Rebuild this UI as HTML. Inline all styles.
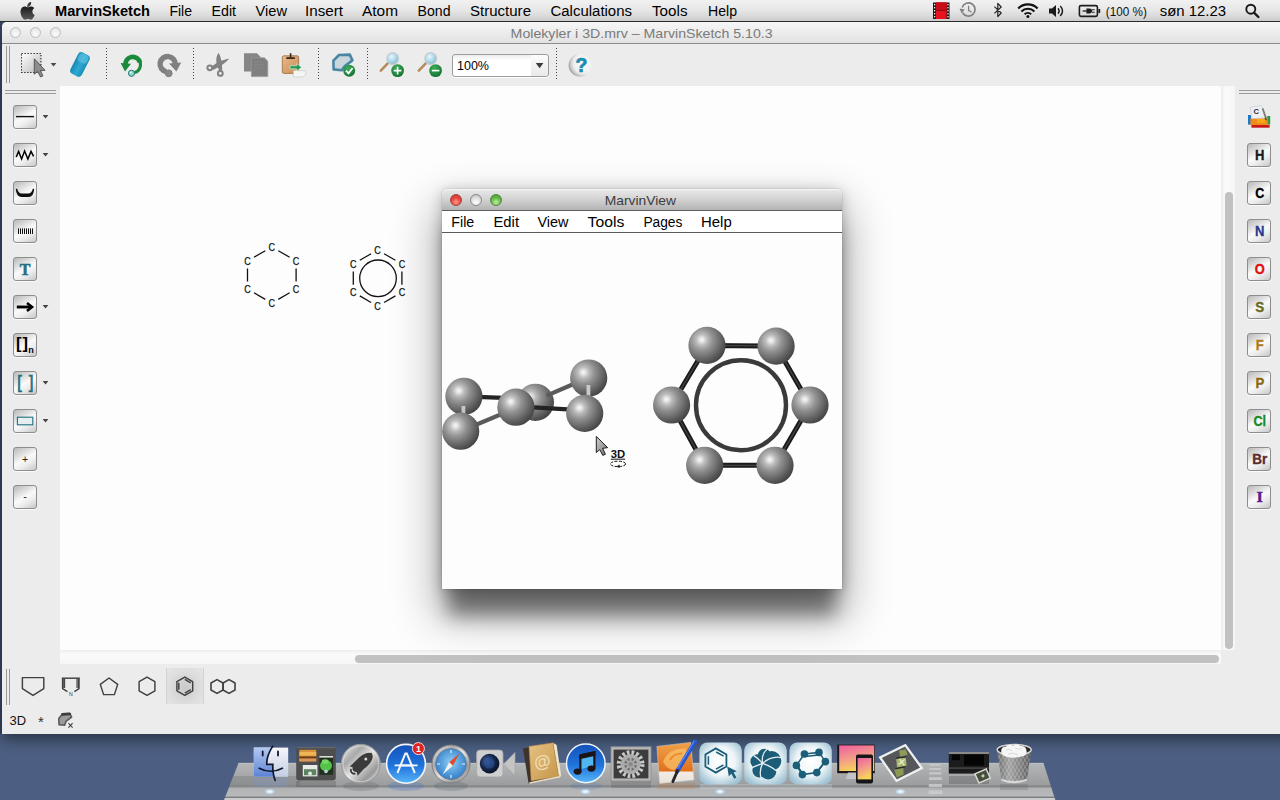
<!DOCTYPE html>
<html lang="da">
<head>
<meta charset="utf-8">
<title>Molekyler i 3D.mrv – MarvinSketch 5.10.3</title>
<style>
html,body{margin:0;padding:0;}
body{width:1280px;height:800px;overflow:hidden;background:#4c5f82;font-family:"Liberation Sans",sans-serif;position:relative;}
.abs{position:absolute;}
svg{position:absolute;left:0;top:0;overflow:visible;}
svg text{font-family:"Liberation Sans",sans-serif;}
#menubar{left:0;top:0;width:1280px;height:21px;background:linear-gradient(#f1f1f1 0%,#e8e8e8 45%,#d8d8d8 80%,#cbcbcb 100%);border-bottom:1px solid #2a2a2a;}
#deskedge{left:0;top:22px;width:2px;height:712px;background:#3a4564;}
#win{left:2px;top:22px;width:1290px;height:712px;background:#ececec;border-radius:5px 5px 0 0;box-shadow:0 6px 14px rgba(0,0,0,.45);}
#wtitle{left:2px;top:22px;width:1290px;height:21px;background:linear-gradient(#f7f7f7,#ececec 50%,#e2e2e2);border-radius:5px 5px 0 0;border-bottom:1px solid #8c8c8c;}
.tl{width:9px;height:9px;border-radius:50%;border:1.5px solid #bdbdbd;background:radial-gradient(circle at 50% 70%,#fbfbfb,#ebebeb 60%,#dddddd);top:27px;}
#canvas{left:60px;top:86px;width:1161px;height:564px;background:#fefdfd;}
#vtrack{left:1221px;top:86px;width:14px;height:564px;background:linear-gradient(90deg,#ededed,#fafafa 30%,#f6f6f6);}
#htrack{left:60px;top:650px;width:1161px;height:14px;background:linear-gradient(#ededed,#fafafa 30%,#f6f6f6);}
#vthumb{left:1225px;top:192px;width:8px;height:457px;border-radius:4px;background:#c1c1c1;}
#hthumb{left:355px;top:655px;width:864px;height:8px;border-radius:4px;background:#c1c1c1;}
.btn{width:22px;height:22px;border:1px solid #8e8e8e;border-radius:3px;background:linear-gradient(150deg,#b8b8b8 0%,#dcdcdc 28%,#fafafa 50%,#ececec 70%,#c6c6c6 100%);box-shadow:0 1px 0 rgba(255,255,255,.8);}
.ebtn{font-weight:bold;font-size:13px;line-height:22px;text-align:center;}
#combo{left:452px;top:54px;width:95px;height:21px;border:1px solid #9d9d9d;border-radius:3px;background:linear-gradient(#ececec,#ffffff 25%,#ffffff);box-shadow:0 1px 0 #fff;}
#comboarrow{left:531px;top:55px;width:17px;height:21px;border-radius:0 3px 3px 0;background:linear-gradient(#fdfdfd,#e9e9e9);}
#tsel{left:166px;top:668px;width:38px;height:36px;background:radial-gradient(ellipse at 50% 55%,#c9c9c9,#dedede 60%,#e6e6e6);box-shadow:inset 1px 0 0 #d2d2d2,inset -1px 0 0 #d2d2d2;}
/* MarvinView window */
#mv{left:442px;top:189px;width:400px;height:400px;background:#fefdfd;border-radius:5px 5px 0 0;box-shadow:0 0 1px rgba(0,0,0,.6),0 32px 18px -6px rgba(0,0,0,.44),0 22px 44px 7px rgba(0,0,0,.3),0 2px 14px rgba(0,0,0,.22);}
#mvtitle{left:442px;top:189px;width:400px;height:21px;background:linear-gradient(#eaeaea,#d2d2d2 50%,#b3b3b3);border-radius:5px 5px 0 0;border-bottom:1px solid #5f5f5f;box-shadow:inset 0 1px 0 #f6f6f6;}
#mvmenu{left:442px;top:211px;width:400px;height:21px;background:#fff;border-bottom:1px solid #5a5a5a;}
.tlc{width:11px;height:11px;border-radius:50%;top:194px;}
</style>
</head>
<body>
<!-- ======== desktop / main window chrome ======== -->
<div class="abs" id="deskedge"></div>
<div class="abs" id="win"></div>
<div class="abs" id="wtitle"></div>
<div class="abs tl" style="left:10px"></div>
<div class="abs tl" style="left:30px"></div>
<div class="abs tl" style="left:50px"></div>
<div class="abs" id="canvas"></div>
<div class="abs" id="vtrack"></div>
<div class="abs" id="htrack"></div>
<div class="abs" id="vthumb"></div>
<div class="abs" id="hthumb"></div>
<div class="abs" id="menubar"></div>
<div class="abs btn" style="left:13px;top:105px"></div>
<div class="abs btn" style="left:13px;top:143px"></div>
<div class="abs btn" style="left:13px;top:181px"></div>
<div class="abs btn" style="left:13px;top:219px"></div>
<div class="abs btn" style="left:13px;top:257px"></div>
<div class="abs btn" style="left:13px;top:295px"></div>
<div class="abs btn" style="left:13px;top:333px"></div>
<div class="abs btn" style="left:13px;top:371px"></div>
<div class="abs btn" style="left:13px;top:409px"></div>
<div class="abs btn" style="left:13px;top:447px"></div>
<div class="abs btn" style="left:13px;top:485px"></div>

<div class="abs btn" style="left:1247px;top:143px"></div>
<div class="abs btn" style="left:1247px;top:181px"></div>
<div class="abs btn" style="left:1247px;top:219px"></div>
<div class="abs btn" style="left:1247px;top:257px"></div>
<div class="abs btn" style="left:1247px;top:295px"></div>
<div class="abs btn" style="left:1247px;top:333px"></div>
<div class="abs btn" style="left:1247px;top:371px"></div>
<div class="abs btn" style="left:1247px;top:409px"></div>
<div class="abs btn" style="left:1247px;top:447px"></div>
<div class="abs btn" style="left:1247px;top:485px"></div>

<div class="abs" id="combo"></div>
<div class="abs" id="comboarrow"></div>
<div class="abs" id="tsel"></div>

<!-- ======== overlay 1 : menubar, toolbars, canvas drawings ======== -->
<svg id="ov1" width="1280" height="800" viewBox="0 0 1280 800">
<defs>
<linearGradient id="gApple" x1="0" y1="0" x2="0" y2="1"><stop offset="0" stop-color="#1a1a1a"/><stop offset="1" stop-color="#5a5a5a"/></linearGradient>
</defs>
<!-- menubar text -->
<g font-size="14" fill="#000">
<text x="55" y="16" font-weight="bold" textLength="95" lengthAdjust="spacingAndGlyphs">MarvinSketch</text>
<text x="169.4" y="16" textLength="22.6" lengthAdjust="spacingAndGlyphs">File</text>
<text x="211.5" y="16" textLength="24.5" lengthAdjust="spacingAndGlyphs">Edit</text>
<text x="255.6" y="16" textLength="31.4" lengthAdjust="spacingAndGlyphs">View</text>
<text x="305" y="16" textLength="38" lengthAdjust="spacingAndGlyphs">Insert</text>
<text x="362" y="16" textLength="36" lengthAdjust="spacingAndGlyphs">Atom</text>
<text x="417.5" y="16" textLength="33" lengthAdjust="spacingAndGlyphs">Bond</text>
<text x="470" y="16" textLength="61" lengthAdjust="spacingAndGlyphs">Structure</text>
<text x="550.5" y="16" textLength="81.5" lengthAdjust="spacingAndGlyphs">Calculations</text>
<text x="652" y="16" textLength="35.5" lengthAdjust="spacingAndGlyphs">Tools</text>
<text x="708" y="16" textLength="29" lengthAdjust="spacingAndGlyphs">Help</text>
<text x="1159.7" y="16" textLength="66.3" lengthAdjust="spacingAndGlyphs">søn 12.23</text>
</g>
<text x="1105.8" y="15.5" font-size="12" fill="#111" textLength="41" lengthAdjust="spacingAndGlyphs">(100 %)</text>
<!-- window title -->
<text x="510.6" y="37.5" font-size="13" fill="#7a7a7a" textLength="262" lengthAdjust="spacingAndGlyphs">Molekyler i 3D.mrv – MarvinSketch 5.10.3</text>
<!-- apple logo -->
<g transform="translate(19.4,2) scale(0.0172)" fill="url(#gApple)">
<path d="M640 190 C690 120 690 40 680 0 C610 10 540 50 500 110 C460 165 440 240 455 300 C525 305 595 255 640 190 Z"/>
<path d="M790 640 C790 500 905 435 910 430 C845 335 745 322 710 320 C625 312 545 370 500 370 C458 370 390 322 320 323 C228 325 143 377 96 460 C0 627 72 873 165 1008 C210 1074 265 1148 336 1145 C405 1142 431 1100 514 1100 C597 1100 620 1145 693 1144 C767 1142 814 1076 859 1010 C911 934 933 860 934 856 C932 855 792 802 790 640 Z" transform="scale(.93) translate(20,-40)"/>
</g>
<!-- film / screen recording icon -->
<rect x="933" y="2.5" width="16.5" height="16.5" fill="#1c1c1c"/>
<rect x="936" y="2.5" width="10.6" height="16.5" fill="#e8121f"/>
<rect x="936" y="2.5" width="10.6" height="8" fill="#c80d18"/>
<path d="M936 10.5H946.6" stroke="#7a0a10" stroke-width=".8"/>
<g fill="#f4f4f4"><rect x="934" y="4" width="1.2" height="1.4"/><rect x="934" y="7" width="1.2" height="1.4"/><rect x="934" y="10" width="1.2" height="1.4"/><rect x="934" y="13" width="1.2" height="1.4"/><rect x="934" y="16" width="1.2" height="1.4"/>
<rect x="947.4" y="4" width="1.2" height="1.4"/><rect x="947.4" y="7" width="1.2" height="1.4"/><rect x="947.4" y="10" width="1.2" height="1.4"/><rect x="947.4" y="13" width="1.2" height="1.4"/><rect x="947.4" y="16" width="1.2" height="1.4"/></g>
<!-- time machine -->
<g fill="none" stroke="#7f7f7f">
<path d="M962.6 12.6 A6.6 6.6 0 1 0 962.2 7.4" stroke-width="1.7"/>
<path d="M968.6 5.8 V10.4 L971.6 12.2" stroke-width="1.3"/>
</g>
<path d="M959.6 8.6 L964.8 9.4 L961.6 13.2 Z" fill="#7f7f7f"/>
<!-- bluetooth -->
<path d="M994.4 6.6 L1001.2 13 L997.8 16.6 V3.4 L1001.2 7 L994.4 13.4" fill="none" stroke="#2a2a2a" stroke-width="1.25" stroke-linejoin="round"/>
<!-- wifi -->
<g fill="none" stroke="#111" stroke-linecap="butt">
<path d="M1018.2 8.4 A13.6 13.6 0 0 1 1037.6 8.4" stroke-width="2.2"/>
<path d="M1021.4 11.4 A9.2 9.2 0 0 1 1034.4 11.4" stroke-width="2.1"/>
<path d="M1024.6 14.2 A4.8 4.8 0 0 1 1031.2 14.2" stroke-width="2"/>
</g>
<circle cx="1027.9" cy="16.6" r="1.5" fill="#111"/>
<!-- volume -->
<path d="M1049 8.6 H1052 L1056 5 V17 L1052 13.4 H1049 Z" fill="#1a1a1a"/>
<g fill="none" stroke="#1a1a1a" stroke-width="1.5"><path d="M1058 8.4 A3.6 3.6 0 0 1 1058 13.6"/><path d="M1060.2 6 A6.6 6.6 0 0 1 1060.2 16"/></g>
<!-- battery -->
<rect x="1079.4" y="5.6" width="18" height="10.8" rx="1.6" fill="none" stroke="#1c1c1c" stroke-width="1.6"/>
<rect x="1098.4" y="9" width="1.8" height="4" fill="#1c1c1c"/>
<path d="M1082.6 11 H1086.6" stroke="#1c1c1c" stroke-width="1.3"/><path d="M1086.4 8.6 H1089.4 Q1092 8.6 1092 11 Q1092 13.4 1089.4 13.4 H1086.4 Z" fill="#1c1c1c"/><path d="M1092 9.8 H1094.6 M1092 12.2 H1094.6" stroke="#1c1c1c" stroke-width="1.1"/>
<!-- spotlight -->
<circle cx="1250.8" cy="9.2" r="4.5" fill="none" stroke="#1a1a1a" stroke-width="1.9"/>
<path d="M1254 12.6 L1258.4 17" stroke="#1a1a1a" stroke-width="2.4" stroke-linecap="round"/>

<defs>
<linearGradient id="gSel" x1="0" y1="0" x2="1" y2="1"><stop offset="0" stop-color="#ffffff"/><stop offset="1" stop-color="#b9b9b9"/></linearGradient>
<linearGradient id="gEr" x1="0" y1="0" x2="1" y2="0"><stop offset="0" stop-color="#1787b3"/><stop offset=".5" stop-color="#2fa9d2"/><stop offset="1" stop-color="#1a8fba"/></linearGradient>
<radialGradient id="gLens" cx=".4" cy=".35" r=".7"><stop offset="0" stop-color="#eaf6fc"/><stop offset=".6" stop-color="#a9d3e6"/><stop offset="1" stop-color="#7fb2cc"/></radialGradient>
<radialGradient id="gGreen" cx=".4" cy=".3" r=".8"><stop offset="0" stop-color="#3fae5a"/><stop offset="1" stop-color="#0f6b2c"/></radialGradient>
<radialGradient id="gHelp" cx=".66" cy=".42" r=".72"><stop offset="0" stop-color="#fbfbfb"/><stop offset=".62" stop-color="#eeeeee"/><stop offset=".8" stop-color="#c6c6c6"/><stop offset="1" stop-color="#8c8c8c"/></radialGradient>
<linearGradient id="gClip" x1="0" y1="0" x2="1" y2="1"><stop offset="0" stop-color="#e9b98a"/><stop offset="1" stop-color="#c98d56"/></linearGradient>
</defs>
<!-- handles -->
<g stroke="#9a9a9a" stroke-width="1">
<path d="M6.5 46V83M9.5 46V83"/>
<path d="M5 90.5H56M5 93.5H56"/>
<path d="M1239 90.5H1280M1239 93.5H1280"/>
<path d="M6.5 669V705M9.5 669V705"/>
</g>
<!-- separators -->
<g stroke="#444" stroke-width="1" stroke-dasharray="1 2">
<path d="M106.5 48V80M193.5 48V80M318.5 48V80M367.5 48V80M556.5 48V80"/>
</g>
<!-- select tool -->
<rect x="21.5" y="53.5" width="19.5" height="19" fill="url(#gSel)" stroke="#1c1c1c" stroke-width="1.1" stroke-dasharray="1.3 1.7"/>
<path d="M34.3 58.8 L34.3 74.2 L37.6 71.4 L40.6 77 L43 75.8 L40.3 70.6 L45 70.3 Z" fill="#8d8d8d" stroke="#4d4d4d" stroke-width=".9" stroke-linejoin="round"/>
<path d="M50.6 63 H56.4 L53.5 66.6 Z" fill="#4a4a4a"/>
<!-- eraser -->
<g transform="rotate(27 80 64.5)">
<rect x="73.6" y="52.5" width="12.8" height="24" rx="4" fill="url(#gEr)"/>
<rect x="75" y="53.3" width="10" height="9" rx="3.2" fill="#6ccbe6" opacity=".55"/>
</g>
<!-- undo -->
<g>
<path d="M125.6 65.6 A7.3 7.3 0 0 1 139.9 62.6" fill="none" stroke="#1c8a3c" stroke-width="4.7"/>
<path d="M139.2 60.4 A8 8 0 0 1 134.2 72.6" fill="none" stroke="#1c8a3c" stroke-width="3"/>
<path d="M120.6 63 L131 63.8 L125 71.4 Z" fill="#1c8a3c"/>
<circle cx="131.5" cy="73.3" r="3.1" fill="#8fd0cc" stroke="#1f7d70" stroke-width="1"/>
<circle cx="130.8" cy="72.5" r="1.1" fill="#e6f6f4"/>
</g>
<!-- redo (disabled) -->
<g>
<path d="M175.2 65 A7.6 7.6 0 1 0 166.4 71.6" fill="none" stroke="#808080" stroke-width="5.4"/>
<path d="M181.2 62.6 L169 63.4 L176.4 71.6 Z" fill="#808080"/>
<circle cx="168.7" cy="73.3" r="3.4" fill="#888" stroke="#7c7c7c" stroke-width="1"/>
</g>
<!-- scissors (disabled) -->
<g fill="#828282">
<path d="M218.6 52.8 C221 57 222 62.4 222.2 70.4 L219.4 71 C215.8 64 215 58 218.6 52.8 Z"/>
<path d="M229.2 58.8 C226 62.6 220.6 66.4 213 70 L211.4 67 C216.6 62.4 223 59.4 229.2 58.8 Z"/>
</g>
<g fill="none" stroke="#828282" stroke-width="2">
<circle cx="209.8" cy="67.8" r="2.4"/>
<circle cx="220.3" cy="73.4" r="2.4"/>
</g>
<!-- copy (disabled) -->
<path d="M244 53.2 H257 L260.2 56.4 V71.4 H244 Z" fill="#868686"/>
<path d="M251.4 57.8 H264.4 L267.8 61.2 V76.6 H251.4 Z" fill="#7f7f7f" stroke="#9a9a9a" stroke-width=".7"/>
<path d="M254 62 H262 M254 65 H264 M254 68 H264" stroke="#8b8b8b" stroke-width=".8"/>
<!-- paste -->
<g>
<rect x="282.3" y="55.8" width="16.4" height="17.6" rx="1.6" fill="url(#gClip)" stroke="#9a6a3c" stroke-width=".8"/>
<rect x="286.3" y="57.2" width="8.6" height="1.8" fill="#3a2a1c"/>
<rect x="289.8" y="53.2" width="1.6" height="4.6" fill="#3a2a1c"/>
<path d="M293.4 70.6 H305.8 V74 L303 77 H293.4 Z" fill="#f4f6f4" stroke="#bfc6c0" stroke-width=".6"/>
<path d="M290 65.8 H296.6 V63.6 L301.6 67.3 L296.6 71 V68.8 H290 Z" fill="#1f9a52" stroke="#e9f6ee" stroke-width=".6"/>
</g>
<!-- clean -->
<g>
<path d="M333.4 60.6 L339 55 L349.8 54.6 L352.4 60.4 L344.6 66.2 L341.8 70.2 L333.6 69.4 Z" fill="#c9d6dc" stroke="#4a86a1" stroke-width="2.6" stroke-linejoin="round"/>
<circle cx="349.2" cy="70.8" r="6" fill="url(#gGreen)"/>
<path d="M346 70.6 L348.5 73.4 L352.6 68" fill="none" stroke="#fff" stroke-width="1.8"/>
</g>
<!-- zoom in -->
<g>
<path d="M388 63.2 L380.8 70.6" stroke="#b58a5c" stroke-width="2.6" stroke-linecap="round"/>
<circle cx="392.7" cy="58.6" r="5.9" fill="url(#gLens)" stroke="#c4ced4" stroke-width="1.3"/>
<circle cx="397.6" cy="70.6" r="6.4" fill="url(#gGreen)"/>
<path d="M393.8 70.6 H401.4 M397.6 66.8 V74.4" stroke="#fff" stroke-width="1.6"/>
</g>
<!-- zoom out -->
<g>
<path d="M426 63.2 L418.8 70.6" stroke="#b58a5c" stroke-width="2.6" stroke-linecap="round"/>
<circle cx="430.7" cy="58.6" r="5.9" fill="url(#gLens)" stroke="#c4ced4" stroke-width="1.3"/>
<circle cx="435.6" cy="70.6" r="6.4" fill="url(#gGreen)"/>
<path d="M431.8 70.6 H439.4" stroke="#fff" stroke-width="1.6"/>
</g>
<!-- combobox -->
<text x="457" y="70" font-size="13" fill="#000" textLength="32" lengthAdjust="spacingAndGlyphs">100%</text>
<path d="M535.8 63 H543.4 L539.6 68.2 Z" fill="#3c3c3c"/>
<!-- help -->
<circle cx="580" cy="65.2" r="11.4" fill="url(#gHelp)"/>
<text x="581.4" y="71.8" font-size="19.5" font-weight="bold" fill="#1b8db0" stroke="#1b8db0" stroke-width=".7" text-anchor="middle">?</text>

<!-- dropdown arrows -->
<g fill="#444">
<path d="M42.6 115 H48.4 L45.5 118.6 Z"/><path d="M42.6 153 H48.4 L45.5 156.6 Z"/><path d="M42.6 305 H48.4 L45.5 308.6 Z"/><path d="M42.6 381 H48.4 L45.5 384.6 Z"/><path d="M42.6 419 H48.4 L45.5 422.6 Z"/>
</g>
<path d="M16 116.6 H34" stroke="#111" stroke-width="1.4"/>
<path d="M16.2 157 L18.6 151.4 L21.6 159 L24.6 151 L27.9 159 L31 151.4 L33.6 156.4" fill="none" stroke="#000" stroke-width="1.5" stroke-linejoin="miter"/>
<path d="M15.8 188.8 L17.2 188.8 Q18.4 193.5 21.6 193.5 H28.4 Q31.6 193.5 32.8 188.8 L34.2 188.8 Q33.8 197 28.4 197 H21.6 Q16.2 197 15.8 188.8 Z" fill="#111"/>
<path d="M18.5 228.4V234M20.5 228.4V234M22.5 228.4V234M24.5 228.4V234M26.5 228.4V234M28.5 228.4V234M30.5 228.4V234M32.5 228.4V234" stroke="#111" stroke-width="1"/>
<text x="25" y="274.6" font-size="16" font-weight="bold" fill="#1f6f80" stroke="#1f6f80" stroke-width=".5" text-anchor="middle" style="font-family:'Liberation Serif',serif">T</text>
<path d="M16.8 307 H31" stroke="#000" stroke-width="2.9"/><path d="M27 303 L32 307 L27 311" fill="none" stroke="#000" stroke-width="2.6" stroke-linejoin="miter"/>
<text x="15.9" y="349.2" font-size="16.5" font-weight="bold" fill="#000">[</text><text x="22.4" y="349.2" font-size="16.5" font-weight="bold" fill="#000">]</text>
<text x="28.2" y="353.4" font-size="9" font-weight="bold" fill="#000">n</text>
<text x="17" y="387.8" font-size="17.5" fill="#1f6f80" stroke="#1f6f80" stroke-width=".5">[</text><text x="28.8" y="387.8" font-size="17.5" fill="#1f6f80" stroke="#1f6f80" stroke-width=".5">]</text>
<rect x="17.4" y="417.2" width="15.4" height="7.6" fill="#e6eef0" stroke="#1f6f80" stroke-width="1.1"/>
<text x="25" y="462.6" font-size="10.5" fill="#222" text-anchor="middle">+</text>
<text x="25" y="500.4" font-size="11" fill="#222" text-anchor="middle">-</text>

<!-- periodic table icon -->
<g>
<rect x="1248" y="115" width="3" height="9.6" fill="#1e78c8"/>
<rect x="1267.2" y="116" width="3" height="8.6" fill="#2c9a3a"/>
<rect x="1250.4" y="118.4" width="17.4" height="6.8" fill="#f08a18"/>
<rect x="1257" y="119" width="8" height="4" fill="#f6b21a" opacity=".7"/>
<rect x="1251.4" y="125" width="18.2" height="2.7" fill="#c81818"/>
<path d="M1250.2 107 L1261.6 105.6 L1264.8 117.8 L1252.2 118.6 Z" fill="#eeeff1" stroke="#c4c7cc" stroke-width=".6"/>
<text x="1253.6" y="113.6" font-size="7.6" font-weight="bold" fill="#2a2a44">C</text>
<path d="M1262.6 108.4 L1266.2 118.6" stroke="#7d7f74" stroke-width="1.7"/>
<path d="M1265.6 117.4 L1267.4 120.6 L1264.4 119 Z" fill="#3a3a3a"/>
</g>
<g font-size="14.2" stroke-width=".35" font-weight="bold" text-anchor="middle">
<text x="1259.8" y="160.0" fill="#1a1a1a" stroke="#1a1a1a" textLength="9.4" lengthAdjust="spacingAndGlyphs">H</text>
<text x="1259.8" y="198.0" fill="#000000" stroke="#000000" textLength="9" lengthAdjust="spacingAndGlyphs">C</text>
<text x="1259.8" y="236.0" fill="#2b3a8f" stroke="#2b3a8f" textLength="9.4" lengthAdjust="spacingAndGlyphs">N</text>
<text x="1259.8" y="274.0" fill="#e01010" stroke="#e01010" textLength="10" lengthAdjust="spacingAndGlyphs">O</text>
<text x="1259.8" y="312.0" fill="#6b6b1e" stroke="#6b6b1e" textLength="9" lengthAdjust="spacingAndGlyphs">S</text>
<text x="1259.8" y="350.0" fill="#b07a1e" stroke="#b07a1e" textLength="8" lengthAdjust="spacingAndGlyphs">F</text>
<text x="1259.8" y="388.0" fill="#8a6a10" stroke="#8a6a10" textLength="8.8" lengthAdjust="spacingAndGlyphs">P</text>
<text x="1259.8" y="426.0" fill="#128a2e" stroke="#128a2e" textLength="12.6" lengthAdjust="spacingAndGlyphs">Cl</text>
<text x="1259.8" y="464.0" fill="#5a2a2a" stroke="#5a2a2a" textLength="15" lengthAdjust="spacingAndGlyphs">Br</text>
<text x="1259.8" y="502.0" fill="#5a1a8a" stroke="#5a1a8a" textLength="6.4" lengthAdjust="spacingAndGlyphs" style="font-family:'Liberation Serif',serif">I</text>
</g>

<g font-size="10.2" fill="#111" stroke="#111" stroke-width=".25">
<path d="M278.3 250.7L289.6 257.2M296.1 268.4L296.1 281.6M289.6 292.8L278.3 299.4M265.3 299.4L254.0 292.8M247.5 281.6L247.5 268.4M254.0 257.2L265.3 250.7" stroke="#111" stroke-width="1.3" fill="none"/>
<text x="271.8" y="250.5" text-anchor="middle" textLength="6.5" lengthAdjust="spacingAndGlyphs">C</text>
<text x="296.1" y="264.6" text-anchor="middle" textLength="6.5" lengthAdjust="spacingAndGlyphs">C</text>
<text x="296.1" y="292.7" text-anchor="middle" textLength="6.5" lengthAdjust="spacingAndGlyphs">C</text>
<text x="271.8" y="306.7" text-anchor="middle" textLength="6.5" lengthAdjust="spacingAndGlyphs">C</text>
<text x="247.5" y="292.7" text-anchor="middle" textLength="6.5" lengthAdjust="spacingAndGlyphs">C</text>
<text x="247.5" y="264.6" text-anchor="middle" textLength="6.5" lengthAdjust="spacingAndGlyphs">C</text>
<path d="M384.1 253.8L395.4 260.3M401.9 271.6L401.9 284.7M395.4 295.9L384.1 302.5M371.1 302.5L359.8 295.9M353.3 284.7L353.3 271.6M359.8 260.3L371.1 253.8" stroke="#111" stroke-width="1.3" fill="none"/>
<text x="377.6" y="253.6" text-anchor="middle" textLength="6.5" lengthAdjust="spacingAndGlyphs">C</text>
<text x="401.9" y="267.7" text-anchor="middle" textLength="6.5" lengthAdjust="spacingAndGlyphs">C</text>
<text x="401.9" y="295.8" text-anchor="middle" textLength="6.5" lengthAdjust="spacingAndGlyphs">C</text>
<text x="377.6" y="309.8" text-anchor="middle" textLength="6.5" lengthAdjust="spacingAndGlyphs">C</text>
<text x="353.3" y="295.8" text-anchor="middle" textLength="6.5" lengthAdjust="spacingAndGlyphs">C</text>
<text x="353.3" y="267.7" text-anchor="middle" textLength="6.5" lengthAdjust="spacingAndGlyphs">C</text>
<circle cx="378.0" cy="278.3" r="18.3" fill="none" stroke="#111" stroke-width="1.3"/>
</g>

<g fill="none" stroke="#404040" stroke-width="1.45" stroke-linejoin="round">
<path d="M22.4 677.6 H43.8 V688.6 L33 695.4 L22.4 688.6 Z"/>
<path d="M61.8 678.2 H79.8"/>
<path d="M62.6 678.4 V688.6 L67.4 691.6 M79 678.4 V688.6 L74.4 691.6" />
<path d="M63.2 679 V688 M64.6 679 V688 M77 679 V688 M78.4 679 V688" stroke-width="1.1"/>
<path d="M109.0 678.0L117.7 684.4L114.4 694.6L103.6 694.6L100.3 684.4Z"/>
<path d="M147.0 677.1L154.9 681.7L154.9 690.8L147.0 695.3L139.1 690.8L139.1 681.7Z"/>
<path d="M184.8 677.1L192.7 681.7L192.7 690.8L184.8 695.3L176.9 690.8L176.9 681.7Z"/>
<path d="M184.8 679.3L190.8 682.8M190.8 689.7L184.8 693.1M178.8 689.7L178.8 682.8"/>
<path d="M217.0 679.6L223.0 683.0L223.0 690.0L217.0 693.4L211.0 690.0L211.0 683.0Z" stroke-width="1.6"/>
<path d="M229.0 679.6L235.0 683.0L235.0 690.0L229.0 693.4L223.0 690.0L223.0 683.0Z" stroke-width="1.6"/>
</g>
<text x="70.8" y="695.8" font-size="5.2" fill="#3a3a3a" text-anchor="middle">N</text>
<text x="9.6" y="724.8" font-size="13" fill="#111" textLength="16.6" lengthAdjust="spacingAndGlyphs">3D</text>
<text x="37.9" y="726.8" font-size="15" fill="#333">*</text>
<path d="M58.8 718.6 L62.6 713.8 L69.6 713.4 L71.6 717 L66 721.4 L64.6 725.2 L59 724.6 Z" fill="#9a9a9a" stroke="#5c5c5c" stroke-width="1.6" stroke-linejoin="round"/>
<path d="M62.4 714.4 L69.8 714" stroke="#3c3c3c" stroke-width="2.6" stroke-linecap="round"/>
<path d="M68.4 723.2 L72.6 727.6 M72.6 723.2 L68.4 727.6" stroke="#444" stroke-width="1.1"/>

</svg>

<!-- ======== MarvinView window ======== -->
<div class="abs" id="mv"></div>
<div class="abs" id="mvtitle"></div>
<div class="abs" id="mvmenu"></div>
<div class="abs tlc" style="left:450px;background:radial-gradient(circle at 50% 72%,#ff9a90 0%,#e8483f 50%,#c2352d 100%);border:1px solid #a8433c;width:10px;height:10px;top:194px"></div>
<div class="abs tlc" style="left:470px;background:radial-gradient(circle at 50% 75%,#ffffff 0%,#dedede 55%,#b4b4b4 100%);border:1px solid #888;width:10px;height:10px;top:194px"></div>
<div class="abs tlc" style="left:490px;background:radial-gradient(circle at 50% 72%,#c4f0a4 0%,#66ba48 50%,#46922f 100%);border:1px solid #55893f;width:10px;height:10px;top:194px"></div>
<svg id="ov2" width="1280" height="800" viewBox="0 0 1280 800">
<text x="604.7" y="204.5" font-size="13" fill="#3c3c3c" textLength="71.3" lengthAdjust="spacingAndGlyphs">MarvinView</text>
<g font-size="14" fill="#000">
<text x="451.3" y="226.5" textLength="23" lengthAdjust="spacingAndGlyphs">File</text>
<text x="493.5" y="226.5" textLength="25.5" lengthAdjust="spacingAndGlyphs">Edit</text>
<text x="537.5" y="226.5" textLength="31" lengthAdjust="spacingAndGlyphs">View</text>
<text x="587.6" y="226.5" textLength="36.8" lengthAdjust="spacingAndGlyphs">Tools</text>
<text x="643.4" y="226.5" textLength="39" lengthAdjust="spacingAndGlyphs">Pages</text>
<text x="701" y="226.5" textLength="30.7" lengthAdjust="spacingAndGlyphs">Help</text>
</g>
<defs>
<radialGradient id="gSph" cx=".36" cy=".35" r=".74">
<stop offset="0" stop-color="#f8f8f8"/><stop offset=".07" stop-color="#e8e8e8"/><stop offset=".2" stop-color="#bcbcbc"/><stop offset=".4" stop-color="#929292"/><stop offset=".6" stop-color="#747474"/><stop offset=".8" stop-color="#565656"/><stop offset="1" stop-color="#3c3c3c"/>
</radialGradient>
</defs>
<!-- benzene 3D -->
<g stroke-linecap="butt">
<g stroke="#1a1a1a" stroke-width="5">
<path d="M707 345.4 L776 346 L810 405 L775 465.3 L704.6 465.3 L671.5 405 Z" fill="none"/>
</g>
<g stroke="#444" stroke-width="1.3">
<path d="M707 345.4 L776 346 L810 405 L775 465.3 L704.6 465.3 L671.5 405 Z" fill="none"/>
</g>
<circle cx="741" cy="405.2" r="45" fill="none" stroke="#3a3a3a" stroke-width="4.4"/>
</g>
<g fill="url(#gSph)">
<circle cx="707" cy="345.4" r="18.6"/><circle cx="776.1" cy="346.1" r="18.6"/>
<circle cx="671.6" cy="405" r="18.6"/><circle cx="810" cy="405" r="18.6"/>
<circle cx="704.7" cy="465.3" r="18.6"/><circle cx="775" cy="465.3" r="18.6"/>
</g>
<!-- cyclohexane 3D (side view) -->
<path d="M463.9 396.4 L516 398.4" stroke="#232323" stroke-width="4.2"/>
<circle cx="463.9" cy="396.3" r="18.6" fill="url(#gSph)"/>
<circle cx="535.4" cy="402.3" r="18.6" fill="url(#gSph)"/>
<path d="M546.6 395.6 L580 381.2" stroke="#5a5a5a" stroke-width="4.2"/>
<circle cx="588.7" cy="378" r="18.6" fill="url(#gSph)"/>
<path d="M463.4 406 V420" stroke="#c6c6c6" stroke-width="3.8"/>
<path d="M588.4 385 V398" stroke="#cacaca" stroke-width="3.8"/>
<path d="M460.7 431.2 L516 408" stroke="#5a5a5a" stroke-width="4.2"/>
<path d="M516 406.4 L584.7 410.4" stroke="#232323" stroke-width="4.2"/>
<circle cx="460.7" cy="431.2" r="18.6" fill="url(#gSph)"/>
<circle cx="584.7" cy="413.4" r="18.6" fill="url(#gSph)"/>
<circle cx="515.9" cy="407.2" r="18.6" fill="url(#gSph)"/>
<!-- cursor -->
<defs><linearGradient id="gCur" x1="0" y1="0" x2="1" y2="1"><stop offset="0" stop-color="#d2d2d2"/><stop offset="1" stop-color="#707070"/></linearGradient></defs>
<path d="M596.3 436.4 V452.6 L599.8 449.6 L602.8 455.4 L605.4 454.2 L602.6 448.4 L607.6 447.6 Z" fill="url(#gCur)" stroke="#1e1e1e" stroke-width="1" stroke-linejoin="round"/>
<text x="610.8" y="458.3" font-size="11.5" font-weight="bold" fill="#111" textLength="14.4" lengthAdjust="spacingAndGlyphs">3D</text>
<path d="M610.8 459.2 H625.2" stroke="#111" stroke-width="1"/>
<ellipse cx="618" cy="463.9" rx="7.6" ry="2.7" fill="none" stroke="#1a1a1a" stroke-width="1" stroke-dasharray="3 1.4"/>
<path d="M616.4 466.4 L619.6 464.6 L619.6 468 Z" fill="#1a1a1a"/>

</svg>

<!-- ======== Dock ======== -->
<svg id="ov3" width="1280" height="800" viewBox="0 0 1280 800">
<defs>
<linearGradient id="dShelf" x1="0" y1="0" x2="0" y2="1">
<stop offset="0" stop-color="#b4b6b7"/><stop offset=".35" stop-color="#a6a8a9"/><stop offset=".63" stop-color="#9b9d9e"/><stop offset=".66" stop-color="#868889"/><stop offset=".70" stop-color="#868889"/><stop offset=".72" stop-color="#b0b2b3"/><stop offset="1" stop-color="#b9bbbc"/>
</linearGradient>
<linearGradient id="dFinL" x1="0" y1="0" x2="0" y2="1"><stop offset="0" stop-color="#b4c8f0"/><stop offset="1" stop-color="#5c84d6"/></linearGradient>
<linearGradient id="dFinR" x1="0" y1="0" x2="0" y2="1"><stop offset="0" stop-color="#f6f7fb"/><stop offset="1" stop-color="#c4cde2"/></linearGradient>
<linearGradient id="dMetal" x1="0" y1="0" x2="1" y2="1"><stop offset="0" stop-color="#f2f2f2"/><stop offset=".3" stop-color="#a9a9a9"/><stop offset=".5" stop-color="#e4e4e4"/><stop offset=".75" stop-color="#9a9a9a"/><stop offset="1" stop-color="#d8d8d8"/></linearGradient>
<linearGradient id="dBlue" x1="0" y1="0" x2="0" y2="1"><stop offset="0" stop-color="#1450b8"/><stop offset=".55" stop-color="#1f74dc"/><stop offset="1" stop-color="#58b4f6"/></linearGradient>
<radialGradient id="dSafari" cx=".5" cy=".45" r=".6"><stop offset="0" stop-color="#8fd0f4"/><stop offset="1" stop-color="#2a78c8"/></radialGradient>
<radialGradient id="dLens" cx=".4" cy=".4" r=".6"><stop offset="0" stop-color="#4a78b8"/><stop offset=".6" stop-color="#16284c"/><stop offset="1" stop-color="#0c1428"/></radialGradient>
<linearGradient id="dBook" x1="0" y1="0" x2="1" y2="1"><stop offset="0" stop-color="#e6c283"/><stop offset="1" stop-color="#c59549"/></linearGradient>
<linearGradient id="dPages" x1="0" y1="0" x2="0" y2="1"><stop offset="0" stop-color="#f0a24a"/><stop offset=".7" stop-color="#e0701c"/><stop offset=".72" stop-color="#f4ece4"/><stop offset="1" stop-color="#e9e2da"/></linearGradient>
<radialGradient id="dMarvin" cx=".5" cy=".45" r=".62"><stop offset="0" stop-color="#ffffff"/><stop offset=".55" stop-color="#eef5f8"/><stop offset="1" stop-color="#9fc3d4"/></radialGradient>
<linearGradient id="dScr" x1="0" y1="0" x2=".3" y2="1"><stop offset="0" stop-color="#ee5f9e"/><stop offset=".55" stop-color="#f39a8a"/><stop offset="1" stop-color="#f6d25a"/></linearGradient>
<linearGradient id="dTrash" x1="0" y1="0" x2="1" y2="0"><stop offset="0" stop-color="#686868"/><stop offset=".35" stop-color="#a4a4a4"/><stop offset=".7" stop-color="#7e7e7e"/><stop offset="1" stop-color="#585858"/></linearGradient>
<radialGradient id="dGlow" cx=".5" cy=".5" r=".5"><stop offset="0" stop-color="#ffffff"/><stop offset=".5" stop-color="#d2ecff" stop-opacity=".85"/><stop offset="1" stop-color="#a8d4ff" stop-opacity="0"/></radialGradient>
<linearGradient id="dGray" x1="0" y1="0" x2="0" y2="1"><stop offset="0" stop-color="#a8a8a8"/><stop offset="1" stop-color="#6c6c6c"/></linearGradient>
</defs>
<!-- shelf -->
<path d="M238.5 763 H1043.5 L1054.5 797.5 H225 Z" fill="url(#dShelf)"/>
<path d="M225 797.5 H1054.5 L1055.4 800 H224 Z" fill="#c9cbcc"/>
<path d="M225 797.2 H1054.5" stroke="#666869" stroke-width="1"/>
<path d="M238.5 763.3 H1043.5" stroke="#c4c6c8" stroke-width=".8"/>
<path d="M233.4 776 H300 V786 H229.6 Z" fill="#7d7f80" opacity=".45"/>
<!-- faint reflections -->
<g opacity=".22">
<rect x="254" y="778" width="34" height="9" fill="#7a9ae0"/>
<rect x="296" y="781" width="40" height="6" fill="#3c3c3c"/>
<ellipse cx="361" cy="786" rx="18" ry="5" fill="#5a5a5a"/>
<ellipse cx="406" cy="786" rx="18" ry="5" fill="#2a6ad0"/>
<ellipse cx="451" cy="786" rx="17" ry="5" fill="#4a5a6a"/>
<ellipse cx="586" cy="786" rx="16" ry="4" fill="#2a6ad0" opacity=".6"/>
<rect x="611" y="781" width="40" height="7" fill="#4a4a4a"/>
<rect x="657" y="783" width="38" height="6" fill="#d87a30"/>
<rect x="700" y="784" width="132" height="5" fill="#e8f0f4"/>
<rect x="949" y="776" width="40" height="8" fill="#2a2a2a"/>
<rect x="1000" y="784" width="28" height="6" fill="#5a5a5a"/>
</g>
<!-- running indicators -->
<ellipse cx="269.8" cy="791.6" rx="6" ry="3.2" fill="url(#dGlow)"/>
<ellipse cx="585.4" cy="791.6" rx="6" ry="3.2" fill="url(#dGlow)"/>
<ellipse cx="720" cy="791.6" rx="6" ry="3.2" fill="url(#dGlow)"/>
<ellipse cx="900.4" cy="791.6" rx="6" ry="3.2" fill="url(#dGlow)"/>
<!-- Finder -->
<rect x="253.8" y="747.6" width="34.4" height="29.2" fill="url(#dFinR)"/>
<path d="M253.8 747.6 H272.2 C268.2 754 266.4 760 266.8 764.4 H272.8 C272.6 769 273 773 273.8 776.8 H253.8 Z" fill="url(#dFinL)"/>
<path d="M273 745.6 C268.6 752.6 266.4 759.6 266.8 764.4 H272.8 C272.6 770.4 273.4 776.4 275.4 781" fill="none" stroke="#10182e" stroke-width="1.7"/>
<path d="M258.6 768 Q270.8 774.6 283 768" fill="none" stroke="#10182e" stroke-width="1.6"/>
<path d="M262.7 751.4 V755.6 M278 751.4 V755.6" stroke="#10182e" stroke-width="1.8" stroke-linecap="round"/>
<!-- Mission Control -->
<rect x="296.2" y="747" width="39.6" height="33.6" rx="3" fill="#4e4e4e"/>
<rect x="296.8" y="747.2" width="38.4" height="1" fill="#7a7a7a" opacity=".7"/>
<rect x="299.4" y="749.8" width="16.8" height="11.6" fill="#d9923a"/>
<rect x="299.4" y="752" width="16.8" height="3.6" fill="#f0b454"/>
<rect x="299.4" y="756.4" width="16.8" height="2.2" fill="#6a3c1c"/>
<rect x="299.4" y="758.6" width="16.8" height="2.8" fill="#d8975a"/>
<rect x="319.4" y="756" width="13.6" height="18.8" fill="#23301f"/>
<rect x="319.4" y="756" width="13.6" height="1.6" fill="#d9dcd9"/>
<ellipse cx="326" cy="765.6" rx="6" ry="5.6" fill="#56c24a"/>
<ellipse cx="325.2" cy="761.6" rx="3.4" ry="2.4" fill="#74d862"/>
<circle cx="326" cy="771.4" r="1.8" fill="#b8d4e8"/>
<rect x="302.8" y="765" width="14.6" height="11.4" fill="#e9ebea"/>
<rect x="304" y="769.2" width="12.2" height="6" fill="#5d8462"/>
<circle cx="310" cy="773.4" r="2" fill="#e4e6e4"/>
<!-- Launchpad -->
<circle cx="360.8" cy="763.8" r="19.5" fill="url(#dMetal)" stroke="#9a9a9a" stroke-width=".9"/>
<circle cx="360.8" cy="763.8" r="17.8" fill="none" stroke="#ffffff" stroke-opacity=".4" stroke-width="1"/>
<g fill="#3b3b3b">
<ellipse cx="362.6" cy="762.4" rx="12.6" ry="6" transform="rotate(-43 362.6 762.4)"/>
<path d="M372 752.6 L365 755.6 L369.6 760.4 Z"/>
<path d="M356 760.6 L349.8 766.6 L355.4 768 Z"/>
<path d="M363.4 769.4 L357.6 775.8 L356.2 770 Z"/>
</g>
<path d="M351.2 769 A3.2 3.2 0 0 0 355.4 773.4" fill="none" stroke="#3b3b3b" stroke-width="1.8"/>
<circle cx="365.8" cy="759" r="1.5" fill="#d8d8d8"/>
<!-- App Store -->
<circle cx="406" cy="763.8" r="19.4" fill="url(#dBlue)" stroke="#f2f6fb" stroke-width="1.6"/>
<path d="M397.4 773 L405.4 753.4 H406.8 L414.8 773 M399 765.4 H413" fill="none" stroke="#f4f8fc" stroke-width="2"/>
<path d="M394.6 765.4 H417.6" stroke="#f4f8fc" stroke-width="1.8"/>
<circle cx="418.4" cy="748.6" r="6" fill="#e02424" stroke="#f6d8d8" stroke-width="1"/>
<text x="418.4" y="752" font-size="9" font-weight="bold" fill="#fff" text-anchor="middle">1</text>
<!-- Safari -->
<circle cx="451" cy="764" r="19" fill="url(#dMetal)" stroke="#7e7e7e" stroke-width="1"/>
<circle cx="451" cy="764" r="15.4" fill="url(#dSafari)" stroke="#6a7a8a" stroke-width=".8"/>
<path d="M459.4 753.6 L452.8 765.8 L449.2 762.2 Z" fill="#e24a2a"/>
<path d="M442.6 774.4 L449.2 762.2 L452.8 765.8 Z" fill="#f4f4f4"/>
<path d="M451 750 V753 M451 775 V778 M437 764 H440 M462 764 H465" stroke="#e8f4fc" stroke-width="1.2"/>
<!-- FaceTime -->
<rect x="476.6" y="750" width="26.4" height="27" rx="3.4" fill="#cfcfcf" stroke="#a4a4a4" stroke-width=".8"/>
<path d="M503.6 764 L515 752.4 V775.6 Z" fill="#c4c4c4" stroke="#a4a4a4" stroke-width=".6"/>
<circle cx="489.6" cy="763.6" r="9.8" fill="url(#dLens)"/>
<circle cx="489.6" cy="763.6" r="5" fill="#2a4a8a" opacity=".7"/>
<!-- Contacts -->
<path d="M523 748.4 L552.6 742.6 L559.6 776.6 L528.6 783.4 Z" fill="#3e3329"/>
<path d="M553 742.8 L556.6 745 L561 774.6 L558.6 776.6 Z" fill="#efe6cf"/>
<path d="M529 746.4 L553 742.8 L558.6 776.4 L531.2 780.8 Z" fill="url(#dBook)" stroke="#b48a44" stroke-width=".6"/>
<path d="M529.4 783 L559.4 776.8 L561 775" fill="none" stroke="#e6dcc2" stroke-width="1.4"/>
<text x="542.4" y="767.2" font-size="17" font-weight="bold" fill="#efdcae" text-anchor="middle" transform="rotate(-9 542.4 761.4)">@</text>
<!-- iTunes -->
<circle cx="585.8" cy="763.4" r="19.3" fill="url(#dBlue)" stroke="#eef4fb" stroke-width="1.5"/>
<path d="M581 757.4 L593.6 754.8 V766 L581 769 Z" fill="#58bdf2" opacity=".9"/>
<path d="M580.4 755.4 L594.4 752.4 V768.4 M580.4 755.4 V771.6" fill="none" stroke="#1c1416" stroke-width="2.1"/>
<path d="M579.4 754.4 L595.4 751 V755.8 L579.4 759.2 Z" fill="#1c1416"/>
<ellipse cx="577.6" cy="771.6" rx="4" ry="3.1" fill="#1c1416"/><ellipse cx="591.4" cy="768.6" rx="4" ry="3.1" fill="#1c1416"/>
<!-- System Preferences -->
<rect x="611" y="746.8" width="40" height="34.2" fill="#b6b6b6" stroke="#8e8e8e" stroke-width=".8"/>
<rect x="613.6" y="749.6" width="34.8" height="28.8" fill="#3c3c3c"/>
<circle cx="630.6" cy="764.2" r="11.6" fill="none" stroke="#c9c9c9" stroke-width="4.6" stroke-dasharray="2.6 2"/>
<circle cx="630.6" cy="764.2" r="10" fill="#adadad"/>
<circle cx="630.6" cy="764.2" r="6.4" fill="#6e6e6e"/>
<circle cx="630.6" cy="764.2" r="3.4" fill="#c4c4c4"/>
<path d="M630.6 754.6 V773.8 M621 764.2 H640.2 M623.8 757.4 L637.4 771 M637.4 757.4 L623.8 771" stroke="#a9a9a9" stroke-width="2"/>
<circle cx="630.6" cy="764.2" r="2.2" fill="#8a8a8a"/>
<!-- Pages -->
<path d="M656.9 746.4 L690.8 742.4 L694 780 L659.6 783.4 Z" fill="url(#dPages)" stroke="#d0c8c0" stroke-width=".6"/>
<path d="M663 762 Q668 748 686 748.6 Q688 762 674 770 Q668 770 663 762 Z" fill="#f8c06a" opacity=".75"/>
<path d="M670 760 Q674 753 682 753.6" fill="none" stroke="#e87a1c" stroke-width="1.6" opacity=".8"/>
<path d="M695 741.6 L677 771.6" stroke="#2456d6" stroke-width="4.2" stroke-linecap="round"/>
<path d="M694 741.2 L678 768" stroke="#6a9af0" stroke-width="1.2" stroke-linecap="round" opacity=".8"/>
<path d="M677.6 770.6 L672.8 781.6" stroke="#26262c" stroke-width="2.8" stroke-linecap="round"/>
<!-- MarvinSketch -->
<rect x="699.4" y="742.4" width="42.4" height="42" rx="8" fill="url(#dMarvin)"/>
<path d="M715.8 748.4 L726.4 754.4 V766.6 L715.8 772.6 L705.4 766.6 V754.4 Z" fill="none" stroke="#1c5d78" stroke-width="1.8"/>
<path d="M708.4 756.2 V764.8 M716.2 752 L723.6 756.2 M723.4 765 L716 769.2" stroke="#1c5d78" stroke-width="1.5"/>
<path d="M727.2 766.6 L736.8 771.2 L733.6 772.6 L736.4 777.6 L734.2 778.8 L731.4 773.8 L728.8 776.2 Z" fill="#1c5d78"/>
<!-- MarvinSpace -->
<rect x="744.2" y="742.4" width="42.6" height="42" rx="8" fill="url(#dMarvin)"/>
<g fill="#1c5d78">
<circle cx="771.6" cy="760.8" r="9.7"/><circle cx="764.4" cy="755.4" r="6.6"/><circle cx="757.6" cy="761.4" r="7.2"/><circle cx="759.6" cy="770.4" r="7.2"/><circle cx="768.2" cy="771.2" r="8.2"/>
</g>
<path d="M762.6 763.4 C761.6 758 763 752.6 767.4 748.8 M762.6 763.4 C768 758.6 775 756.4 781.4 757.6 M762.6 763.4 C768.4 765.4 774.6 768.4 779.4 773.6 M762.6 763.4 C760 768.6 759.6 774.6 761.6 779.6 M762.6 763.4 C758 765.4 754 766.4 750.8 768.6 M762.6 763.4 C759.6 760.4 756.6 757 753.4 755.4" fill="none" stroke="#e6f0f4" stroke-width="1.25"/>
<!-- MarvinView -->
<rect x="789.4" y="742.4" width="42.4" height="42" rx="8" fill="url(#dMarvin)"/>
<g stroke="#1c5d78" stroke-width="1.5" fill="none">
<path d="M804.4 754 L819 752.4 L825.4 761.6 L816.8 772.6 L802.4 774.6 L796.4 765.4 Z"/>
<path d="M805 756.4 L818.6 755 M823 764 L815.4 774 M798.6 767.6 L804 775.6"/>
</g>
<g fill="#1c5d78"><circle cx="804.4" cy="754" r="3.8"/><circle cx="819" cy="752.4" r="3.8"/><circle cx="825.4" cy="761.6" r="3.8"/><circle cx="816.8" cy="772.6" r="3.8"/><circle cx="802.4" cy="774.6" r="3.8"/><circle cx="796.4" cy="765.4" r="3.8"/></g>
<!-- Screens -->
<rect x="837.2" y="744.6" width="37.6" height="28.6" fill="#1c1418"/><rect x="839.2" y="745.4" width="35" height="25.6" fill="url(#dScr)"/>
<path d="M848 772.4 H862 L864 779 H846 Z" fill="#c4c4c8"/>
<rect x="856" y="754.4" width="17" height="29" rx="1.8" fill="#161616"/>
<rect x="857.6" y="758" width="13.8" height="21.4" fill="url(#dScr)"/>
<!-- xScope-like diamond -->
<path d="M905.3 745.2 L921.8 768 L896.6 780.8 L880.1 757.5 Z" fill="#55575a" stroke="#eef0f0" stroke-width="2.3" stroke-linejoin="miter"/>
<path d="M899 750.8 L905.6 749.2 L907.6 754.8 L900.4 756.4 Z" fill="#8d9c56"/>
<path d="M896.2 759.2 L905.8 757.2 L906.6 765.6 L897 767.4 Z" fill="#a7b76c"/>
<path d="M894.2 769.8 L903.4 768 L903.6 774.6 L896.8 777.6 Z" fill="#8a9a50"/>
<path d="M896 758 L906.4 757 M895.4 768.6 L905.4 766.8" stroke="#22261e" stroke-width="1"/>
<path d="M899.6 759 L904.4 765.4 M904.6 759.6 L898.6 764.6" stroke="#e6edcc" stroke-width="1.3"/>
<!-- separator -->
<g fill="#cdcfd0" opacity=".8">
<rect x="929.6" y="764.2" width="11" height="1.6"/><rect x="929.4" y="768" width="11.6" height="1.9"/><rect x="929.2" y="772.2" width="12.2" height="2.3"/><rect x="929" y="777.2" width="12.8" height="2.8"/><rect x="928.8" y="784" width="13.2" height="3.1"/><rect x="928.6" y="790.4" width="13.8" height="3.6"/>
</g>
<!-- minimized window stack -->
<rect x="948.8" y="752" width="40.2" height="21.6" fill="#1c1c1c"/>
<rect x="948.8" y="752" width="40.2" height="2" fill="#8a8a8a"/>
<rect x="952" y="754.6" width="8" height="5.6" fill="#050505"/><rect x="964" y="754.6" width="20" height="11" fill="#050505"/>
<rect x="948.8" y="767.4" width="40.2" height="1.4" fill="#4a4a4a"/>
<g transform="rotate(-24 982.6 776)"><rect x="976.4" y="771" width="12.4" height="10" fill="#464e3c" stroke="#d8d8d4" stroke-width="1.5"/><circle cx="983" cy="776" r="1.6" fill="#c4ccb4"/></g>
<!-- Trash -->
<clipPath id="cTrash"><path d="M997.2 750 L1001.6 781 Q1014 785.6 1026.8 781 L1031.2 750 Z"/></clipPath>
<path d="M997.2 750 L1001.6 781 Q1014 785.6 1026.8 781 L1031.2 750 Z" fill="url(#dTrash)"/>
<g clip-path="url(#cTrash)">
<path d="M970 748 L992 786 M992 748 L970 786 M974 748 L996 786 M996 748 L974 786 M978 748 L1000 786 M1000 748 L978 786 M982 748 L1004 786 M1004 748 L982 786 M986 748 L1008 786 M1008 748 L986 786 M990 748 L1012 786 M1012 748 L990 786 M994 748 L1016 786 M1016 748 L994 786 M998 748 L1020 786 M1020 748 L998 786 M1002 748 L1024 786 M1024 748 L1002 786 M1006 748 L1028 786 M1028 748 L1006 786 M1010 748 L1032 786 M1032 748 L1010 786 M1014 748 L1036 786 M1036 748 L1014 786 M1018 748 L1040 786 M1040 748 L1018 786 M1022 748 L1044 786 M1044 748 L1022 786 M1026 748 L1048 786 M1048 748 L1026 786 M1030 748 L1052 786 M1052 748 L1030 786 M1034 748 L1056 786 M1056 748 L1034 786 M1038 748 L1060 786 M1060 748 L1038 786 M1042 748 L1064 786 M1064 748 L1042 786 M1046 748 L1068 786 M1068 748 L1046 786 " stroke="#e2e2e2" stroke-width=".8" opacity=".38" fill="none"/>
<path d="M1001 778.4 Q1014 783.4 1027.4 778.4 V783 Q1014 787 1001 783 Z" fill="#dedede" opacity=".9"/>
</g>
<ellipse cx="1014.2" cy="749.8" rx="17" ry="5.3" fill="#262626" stroke="#d6d6d6" stroke-width="1.5"/>
<path d="M1001.4 752 Q1000.4 747 1005.6 746.8 Q1008.6 743.6 1013 745.4 Q1017.6 743.2 1021 746 Q1026.4 746 1026.6 751.4 Q1027 755.4 1021.6 756.6 Q1014 758.6 1006.4 756.8 Q1001.6 755.6 1001.4 752 Z" fill="#f6f6f6"/>
<path d="M1006 750 Q1009 748 1012 750.6 M1015 748 Q1018.6 750 1022 748.6 M1008 754 Q1013 752.4 1018 754.6" stroke="#cfcfcf" stroke-width=".8" fill="none"/>

</svg>
</body>
</html>
